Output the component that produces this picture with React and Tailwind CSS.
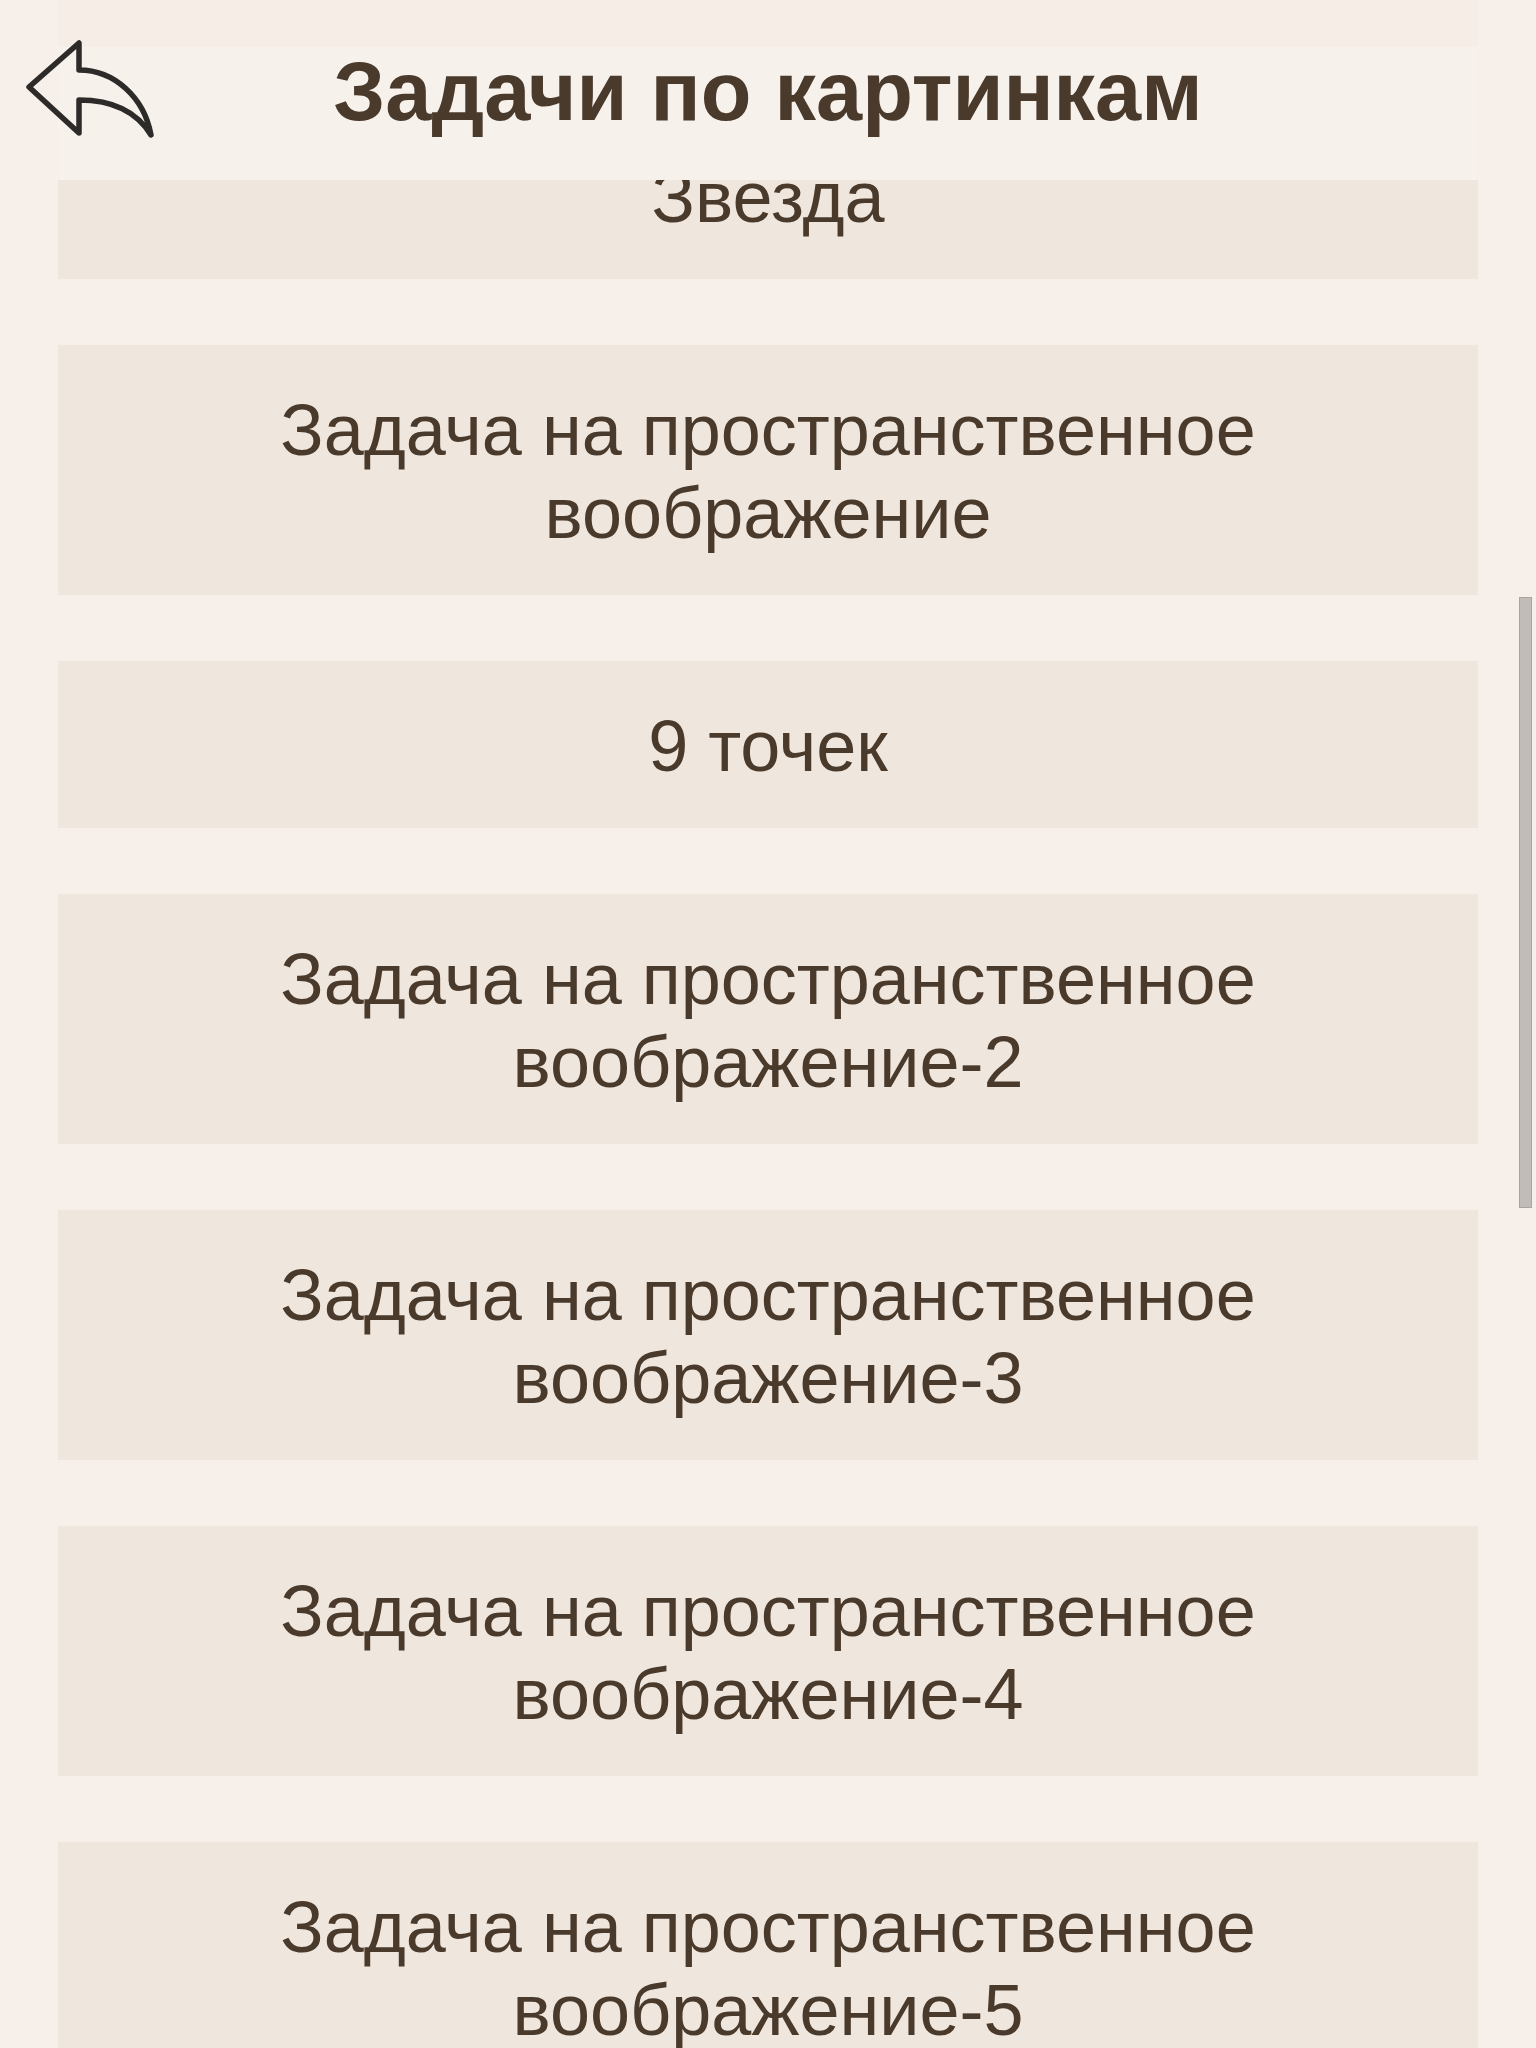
import React from 'react';

const tasks = [
  'Звезда',
  'Задача на пространственное воображение',
  '9 точек',
  'Задача на пространственное воображение-2',
  'Задача на пространственное воображение-3',
  'Задача на пространственное воображение-4',
  'Задача на пространственное воображение-5',
];

const BackIcon = () => (
  <svg width="130" height="101" viewBox="0 0 130 101" fill="none" xmlns="http://www.w3.org/2000/svg">
    <path
      d="M3 48 L53 4 L53 31 C88 31 118 58 125 96 C111 73 88 61 53 61 L53 94 Z"
      stroke="#2d2b2a"
      strokeWidth="5.5"
      strokeLinejoin="round"
    />
  </svg>
);

const App = () => {
  return (
    <div className="relative h-[2048px] overflow-hidden bg-[#f7efea] font-['Liberation_Sans',Arial,sans-serif]">
      {/* Шапка поверх списка */}
      <header className="absolute top-0 left-0 right-0 z-10 h-[180px] px-[58px]">
        <div className="h-full flex items-center justify-center bg-[linear-gradient(to_bottom,#f6ede7_47px,#f7f1ec_47px)]">
          <h1 className="text-[83px] font-bold text-[#4a3a2c] leading-none pt-[2px]">Задачи по картинкам</h1>
        </div>
        <button type="button" className="absolute left-[26px] top-[39px]">
          <BackIcon />
        </button>
      </header>

      {/* Список задач */}
      <main className="pt-[112px] px-[58px] flex flex-col gap-[66px]">
        {tasks.map((title) => (
          <div
            key={title}
            className="bg-[#efe6dd] pt-[44px] pb-[40px] px-[160px] text-center text-[72px] leading-[83px] text-[#4a3a2c]"
          >
            {title}
          </div>
        ))}
      </main>

      {/* Полоса прокрутки */}
      <div className="absolute left-[1519px] top-[597px] w-[13px] h-[611px] bg-[#c1bcb7] border border-[#a8a4a0]" />
    </div>
  );
};

export default App;
